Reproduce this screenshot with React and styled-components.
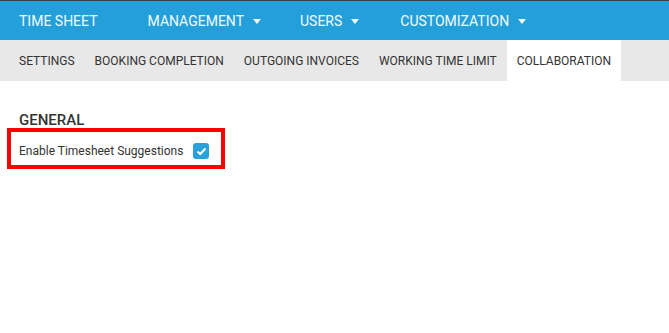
import React from "react";
import styled, { createGlobalStyle } from "styled-components";

const GlobalStyle = createGlobalStyle`
    body {
        margin: 0;
        background: #ffffff;
        font-family: Roboto, "Liberation Sans", sans-serif;
        color: #333;
    }
`;

const TopBar = styled.div`
    display: flex;
    align-items: center;
    height: 39px;
    background-color: #239fd9;
    border-top: 1px solid #3b4046;
    padding-left: 19px;
`;

const NavItem = styled.div`
    display: flex;
    align-items: center;
    gap: 9px;
    color: #f2fbff;
    font-size: 14px;
    margin-right: ${(p) => p.gap}px;
`;

const Caret = styled.span`
    width: 0;
    height: 0;
    border-left: 4.5px solid transparent;
    border-right: 4.5px solid transparent;
    border-top: 5px solid #f2fbff;
    margin-top: 1px;
`;

const TabBar = styled.div`
    display: flex;
    height: 41px;
    background-color: #e8e8e8;
    padding-left: 9px;
`;

const Tab = styled.div`
    display: flex;
    align-items: center;
    padding: 0 10px;
    font-size: 12px;
    color: #333;
    background-color: ${(p) => (p.active ? "#ffffff" : "transparent")};
`;

const Content = styled.div`
    padding: 32px 0 0 7px;
`;

const Heading = styled.h2`
    margin: 0 0 0 12px;
    font-size: 15px;
    font-weight: 500;
    line-height: 15px;
    color: #333;
`;

const Highlight = styled.div`
    display: inline-flex;
    align-items: center;
    gap: 10px;
    box-sizing: content-box;
    width: 202px;
    height: 28px;
    border: 4px solid #ff0000;
    padding: 5px 0 0 8px;
`;

const Label = styled.span`
    font-size: 12px;
    color: #333;
`;

const Check = styled.span`
    display: flex;
    align-items: center;
    justify-content: center;
    width: 16px;
    height: 16px;
    border-radius: 3px;
    background-color: #27a0dc;
`;

export default function App() {
    const tabs = ["SETTINGS", "BOOKING COMPLETION", "OUTGOING INVOICES", "WORKING TIME LIMIT", "COLLABORATION"];

    return (
        <>
            <GlobalStyle />
            <TopBar>
                <NavItem gap={50}>TIME SHEET</NavItem>
                <NavItem gap={39}>MANAGEMENT <Caret /></NavItem>
                <NavItem gap={41}>USERS <Caret /></NavItem>
                <NavItem gap={0}>CUSTOMIZATION <Caret /></NavItem>
            </TopBar>
            <TabBar>
                {tabs.map((t) => (
                    <Tab key={t} active={t === "COLLABORATION"}>{t}</Tab>
                ))}
            </TabBar>
            <Content>
                <Heading>GENERAL</Heading>
                <Highlight>
                    <Label>Enable Timesheet Suggestions</Label>
                    <Check>
                        <svg width="11" height="9" viewBox="0 0 11 9">
                            <path d="M1.5 4.5 L4.2 7 L9.5 1.5" fill="none" stroke="#fff" strokeWidth="2" />
                        </svg>
                    </Check>
                </Highlight>
            </Content>
        </>
    );
}
